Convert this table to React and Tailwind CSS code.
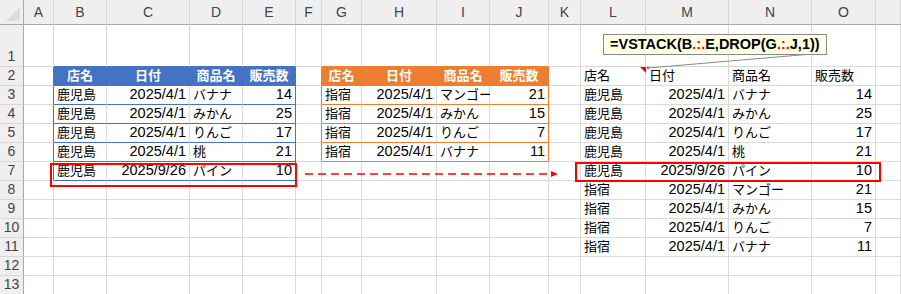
import React from "react";

const colWidths = "24px 30px 53px 83px 53px 53px 26px 40px 75px 53px 59px 32px 65px 83px 83px 64px 1fr";
const letters = ["", "A", "B", "C", "D", "E", "F", "G", "H", "I", "J", "K", "L", "M", "N", "O", ""];

const t1 = [
  ["鹿児島", "2025/4/1", "バナナ", "14"],
  ["鹿児島", "2025/4/1", "みかん", "25"],
  ["鹿児島", "2025/4/1", "りんご", "17"],
  ["鹿児島", "2025/4/1", "桃", "21"],
  ["鹿児島", "2025/9/26", "パイン", "10"],
];
const t2 = [
  ["指宿", "2025/4/1", "マンゴー", "21"],
  ["指宿", "2025/4/1", "みかん", "15"],
  ["指宿", "2025/4/1", "りんご", "7"],
  ["指宿", "2025/4/1", "バナナ", "11"],
];
const heads = ["店名", "日付", "商品名", "販売数"];
const aligns = ["left", "right", "left", "right"];

// build cell contents: key "r-c"
const cells = {};
heads.forEach((h, i) => {
  cells[`2-${2 + i}`] = { v: h, align: "center", head: "blue" };
  cells[`2-${7 + i}`] = { v: h, align: "center", head: "orange" };
  cells[`2-${12 + i}`] = { v: h, align: "left" };
});
t1.forEach((row, r) =>
  row.forEach((v, i) => {
    cells[`${3 + r}-${2 + i}`] = { v, align: aligns[i] };
  })
);
t2.forEach((row, r) =>
  row.forEach((v, i) => {
    cells[`${3 + r}-${7 + i}`] = { v, align: aligns[i] };
  })
);
[...t1, ...t2].forEach((row, r) =>
  row.forEach((v, i) => {
    cells[`${3 + r}-${12 + i}`] = { v, align: aligns[i] };
  })
);

const inT1 = (r, c) => r >= 2 && r <= 7 && c >= 2 && c <= 5;
const inT2 = (r, c) => r >= 2 && r <= 6 && c >= 7 && c <= 10;

function borderClasses(r, c) {
  let right = "border-r-[#dadada]";
  let bottom = "border-b-[#dadada]";
  if (inT1(r, c) || (r === 1 && c >= 2 && c <= 5)) bottom = "border-b-[#4472c4]";
  if (inT1(r, c) && (c === 5 || r === 2)) right = "border-r-[#4472c4]";
  if (c === 1 && r >= 2 && r <= 7) right = "border-r-[#4472c4]";
  if (inT2(r, c) || (r === 1 && c >= 7 && c <= 10)) bottom = "border-b-[#ed7d31]";
  if (inT2(r, c) && (c === 10 || r === 2)) right = "border-r-[#ed7d31]";
  if (c === 6 && r >= 2 && r <= 6) right = "border-r-[#ed7d31]";
  return `${right} ${bottom}`;
}

function Text({ v }) {
  if (/[^\x00-\x7f]/.test(v)) return <span className="text-[13px]">{v}</span>;
  return <span>{v}</span>;
}

function Cell({ r, c }) {
  const d = cells[`${r}-${c}`];
  let bg = "bg-white";
  let color = "text-black";
  let weight = "";
  if (d && d.head === "blue") {
    bg = "bg-[#4472c4]";
    color = "text-white";
    weight = "font-bold";
  }
  if (d && d.head === "orange") {
    bg = "bg-[#ed7d31]";
    color = "text-white";
    weight = "font-bold";
  }
  const just =
    d && d.align === "right" ? "justify-end pr-[3px]" : d && d.align === "center" ? "justify-center" : "justify-start pl-[3px]";
  return (
    <div className={`flex items-end pb-[1px] overflow-visible whitespace-nowrap border-r border-b ${borderClasses(r, c)} ${bg} ${color} ${weight} ${just}`}>
      {d ? <Text v={d.v} /> : null}
    </div>
  );
}

export default function App() {
  const rows = Array.from({ length: 13 }, (_, i) => i + 1);
  return (
    <div className="relative w-[901px] h-[294px] overflow-hidden bg-white font-['Liberation_Sans','Noto_Sans_CJK_JP',sans-serif] text-[14.5px] leading-[17px]">
      <div
        className="grid"
        style={{ gridTemplateColumns: colWidths, gridTemplateRows: "25px 42px repeat(12, 19px)" }}
      >
        {/* column header row */}
        <div className="relative bg-[#efefef] border-r border-b border-r-[#a8a8a8] border-b-[#a8a8a8]">
          <svg className="absolute right-[3px] bottom-[3px]" width="14" height="14" viewBox="0 0 14 14">
            <polygon points="14,0 14,14 0,14" fill="#dcdcdc" />
          </svg>
        </div>
        {letters.slice(1).map((l, i) => (
          <div
            key={i}
            className="flex items-center justify-center bg-[#efefef] border-r border-b border-r-[#d8d8d8] border-b-[#a8a8a8] text-[#444] text-[14px]"
          >
            {l}
          </div>
        ))}
        {rows.map((r) => (
          <React.Fragment key={r}>
            <div className="flex items-end justify-center bg-[#efefef] border-r border-b border-r-[#a8a8a8] border-b-[#d8d8d8] text-[#444] text-[14px] pb-[1px]">
              {r}
            </div>
            {letters.slice(1).map((_, i) => (
              <Cell key={i} r={r} c={i + 1} />
            ))}
          </React.Fragment>
        ))}
      </div>

      {/* highlight boxes */}
      <div className="absolute left-[50px] top-[163px] w-[247px] h-[24px] border-2 border-[#ff0000]" />
      <div className="absolute left-[575px] top-[162px] w-[306px] h-[20px] border-2 border-[#ff0000]" />

      {/* dashed arrow */}
      <svg className="absolute left-[300px] top-[168px]" width="262" height="12" viewBox="0 0 262 12">
        <line x1="5" y1="6" x2="252" y2="6" stroke="#ff0000" strokeWidth="1.5" strokeDasharray="8 5" />
        <polygon points="251,3 258,6 251,9" fill="#ff0000" />
      </svg>

      {/* comment indicator + leader */}
      <svg className="absolute left-0 top-0" width="901" height="294" viewBox="0 0 901 294">
        <polygon points="640,67 646,67 646,73" fill="#ff0000" />
        <line x1="812" y1="54" x2="648" y2="68" stroke="#8a8a8a" strokeWidth="1" />
        <circle cx="648" cy="68" r="1.5" fill="#8a8a8a" />
      </svg>

      {/* formula callout */}
      <div className="absolute left-[603px] top-[34px] w-[224px] h-[21px] bg-[#ffffe1] border border-[#8a8a8a] flex items-center pl-[6px] text-[14.5px] font-bold text-black whitespace-nowrap">
        =VSTACK(B<span className="text-[#ff0000]">.:.</span>E,DROP(G<span className="text-[#ff0000]">.:.</span>J,1))
      </div>
    </div>
  );
}
